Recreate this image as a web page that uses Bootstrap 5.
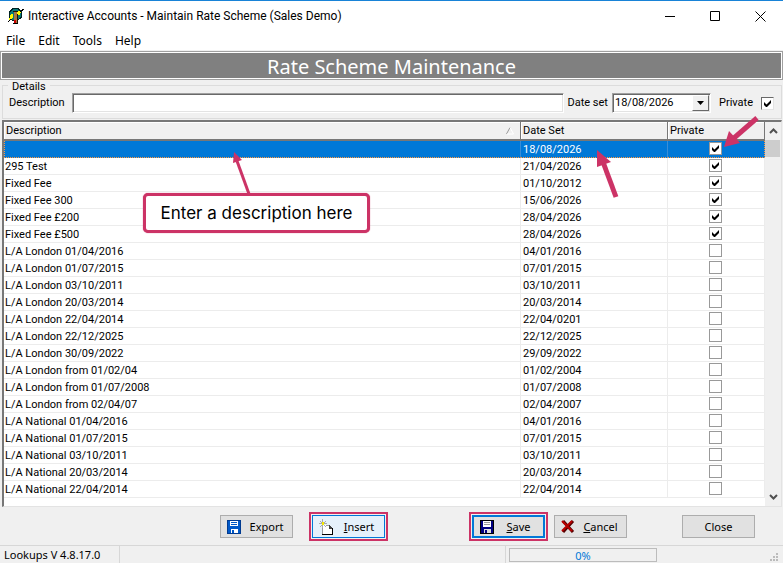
<!DOCTYPE html>
<html lang="en">
<head>
<meta charset="utf-8">
<meta name="viewport" content="width=device-width, initial-scale=1">
<title>Interactive Accounts - Maintain Rate Scheme (Sales Demo)</title>
<link href="https://cdn.jsdelivr.net/npm/bootstrap@5.3.0/dist/css/bootstrap.min.css" rel="stylesheet">
<style>
body{font:11px/16px Roboto,"Noto Sans",sans-serif;color:#000;background:#f0f0f0}
.win{border-top:1px solid #1883d7;min-height:100vh}
.titlebar{height:29px;font-size:12px}
.wbtn{width:45px;height:29px;border:0;background:none;padding:0}
.menubar{height:20px;padding:2px 6px 0;gap:13px;font:12px/18px "Noto Sans",sans-serif}
.menubar a{color:#000;text-decoration:none}
.banner{margin:1px 0 0;height:29px;border:1px solid #a0a0a0;box-shadow:inset 0 0 0 1px #fff;background:#808080;color:#fff;font:20px/30px "Noto Sans",sans-serif;text-align:center}
.group{margin:5px 1px 0 2px;border:1px solid #dcdcdc;height:34px;padding:7px 7px 0 6px;line-height:14px}
.group legend{top:-5px;left:5px;width:auto;padding:0 4px;background:#f0f0f0;font-size:11px;line-height:12px;margin:0}
.desc-label{width:63px}
.sunk{border:1px solid;border-color:#a0a0a0 #fff #fff #a0a0a0;box-shadow:inset 1px 1px #696969,inset -1px -1px #e3e3e3;background:#fff;border-radius:0;height:20px;padding:0 3px;outline:0;color:#000}
.datebox{width:99px;padding:0 2px}
.datebox select{appearance:none;border:0;background:none;padding:0;color:#000;height:16px;line-height:16px;outline:0}
.dropper{width:17px;height:16px;margin-top:1px;right:1px;top:0;background:#f0f0f0;border:1px solid;border-color:#fff #696969 #696969 #fff;pointer-events:none}
.tick{appearance:none;display:block;width:13px;height:13px;margin:0;border:1px solid #999;background:#fff center/11px 11px no-repeat}
.tick:checked{background-image:url("data:image/svg+xml,%3Csvg xmlns='http://www.w3.org/2000/svg' viewBox='0 0 11 11'%3E%3Cpath d='M2 4v3l2 2h1l4-4V2L4.500 6.500z'/%3E%3C/svg%3E")}
.tick-sunk{border-color:#696969 #e3e3e3 #e3e3e3 #696969}
.gridbox{margin:1px 1px 0 2px;border:solid;border-width:2px 1px 1px 2px;border-color:#777 #e3e3e3 #e3e3e3 #777;background:#fff}
.rates{table-layout:fixed;border-collapse:separate;border-spacing:0;width:100%}
.rates th{height:19px;padding:0 2px;font-weight:400;background:#f0f0f0;border-right:1px solid #777;border-bottom:2px solid #777;box-shadow:inset 1px 1px #fff;line-height:17px}
.rates td{height:17px;padding:2px 2px 0;line-height:14px;border-bottom:1px solid #ececec;border-right:1px solid #ececec;white-space:nowrap}
.rates td:first-child{padding-left:1px}
.rates td:last-child{padding:1px 4px 0 2px;vertical-align:top}
.rates .tick{margin:0 auto}
.rates .picked td{background:#0078d7;color:#fff;border-bottom:1px dotted #ff9840;border-right-color:#3a8dd6}
.picked td:first-child{border-left:1px dotted #ff9840}
.rates .picked td:last-child{border-right:1px dotted #ff9840}
.c-date{width:147px}.c-priv{width:97px}
.scroller{width:16px;background:#f0f0f0}
.thumb{width:15px;height:17px;background:#cdcdcd}
.sbtn{border:0;background:none;padding:0;width:16px;height:18px;line-height:0}
.actions{padding:5px 28px 4px 0}
.cmd{width:73px;height:23px;padding:0;border:1px solid #adadad;background:#e1e1e1;color:#000;display:flex;align-items:center;font-family:"Noto Sans",sans-serif}
.cmd svg{flex:none;margin-left:6px}
.cmd span{flex:1;text-align:center}
.hot{border:2px solid #cc3366;padding:1px}
.hot .cmd{border:1px solid #0078d7;background:#e5f1fb}
.hot .cmd.main{border-width:2px;background:#e1e1e1}
.save-slot{margin-left:81px}
.cancel-slot{margin-left:6px}
.close-slot{margin-left:55px}
.status{height:18px;border-top:1px solid #d7d7d7;font-family:"Noto Sans",sans-serif}
.pane{width:120px;height:17px;padding-left:4px;border-right:1px solid #d7d7d7;line-height:18px}
.meter-slot{border-left:1px solid #d7d7d7;padding-left:3px}
.meter{width:148px;height:14px;border:1px solid #bcbcbc;color:#0078d7;text-align:center;line-height:13px;overflow:hidden}
.grip{margin-left:113px;margin-right:3px}
.callout{left:139px;top:71px;width:227px;height:40px;border:3px solid #cc3366;border-radius:5px;background:#fff;font:17px/34px Inter,"Liberation Sans",sans-serif;text-align:center;box-shadow:0 0 1px #cc3366}
.ptr{pointer-events:none}
.ptr-a{left:225px;top:30px}.ptr-b{right:160px;top:28px}.ptr-c{right:21px;top:-6px}
</style>
<script src="https://cdn.jsdelivr.net/npm/bootstrap@5.3.0/dist/js/bootstrap.bundle.min.js"></script>
</head>
<body>
<div class="win d-flex flex-column">
  <header class="bg-white">
    <div class="titlebar d-flex align-items-center ps-2">
      <svg width="16" height="16" viewBox="0 0 16 16" shape-rendering="crispEdges"><path fill="#087878" stroke="#022" d="M5 .5h5l3 3v6l-3 2.500H4L1.500 9V4z"/><path fill="#a87840" d="M6 3h3v12H6z"/><path stroke="#210" d="M9.500 3v12M5 3.500h4"/><path stroke="#ff0" stroke-width="1.500" fill="none" d="M1 11l4-2M2 8l3 1M4 6v4M9 5l4-1M11 3v4"/><path stroke="#000" d="M12 4l4-3M0 14l3-3M5 15.500h5"/><path fill="#c00" d="M6 12h2v3H6z"/></svg>
      <span class="ms-1">Interactive Accounts - Maintain Rate Scheme (Sales Demo)</span>
      <div class="ms-auto d-flex">
        <button class="wbtn" aria-label="Minimise"><svg width="11" height="11"><path stroke="#000" d="M0 5.500h10"/></svg></button>
        <button class="wbtn" aria-label="Maximise"><svg width="11" height="11"><path fill="none" stroke="#000" d="M.5.5h9v9h-9z"/></svg></button>
        <button class="wbtn" aria-label="Close window"><svg width="11" height="11"><path stroke="#000" d="M.5.5l10 10M10.500.5l-10 10"/></svg></button>
      </div>
    </div>
    <nav class="menubar d-flex align-items-center"><a href="#">File</a><a href="#">Edit</a><a href="#">Tools</a><a href="#">Help</a></nav>
  </header>
  <h1 class="banner">Rate Scheme Maintenance</h1>
  <fieldset class="group position-relative d-flex align-items-center">
    <legend class="position-absolute">Details</legend>
    <label for="desc" class="desc-label">Description</label>
    <input id="desc" type="text" class="sunk flex-grow-1">
    <label for="dset" class="mx-1">Date set</label>
    <div class="datebox sunk position-relative d-flex align-items-center">
      <select id="dset" class="w-100"><option>18/08/2026</option></select>
      <span class="dropper position-absolute d-flex align-items-center justify-content-center"><svg width="7" height="4"><path d="M0 0h7L3.500 4z"/></svg></span>
    </div>
    <label for="priv" class="mx-2">Private</label>
    <input id="priv" type="checkbox" class="tick tick-sunk" checked>
  </fieldset>
  <main class="gridbox d-flex flex-grow-1 position-relative">
    <div class="flex-grow-1">
      <table class="rates">
        <colgroup><col><col class="c-date"><col class="c-priv"></colgroup>
        <thead><tr><th scope="col"><span class="d-flex justify-content-between align-items-center">Description<svg width="8" height="8" class="me-1"><path fill="none" stroke="#999" d="M.5 7L4 .5"/><path fill="none" stroke="#fff" d="M4 .5L7.500 7H1"/></svg></span></th><th scope="col">Date Set</th><th scope="col">Private</th></tr></thead>
        <tbody id="rows"></tbody>
      </table>
    </div>
    <div class="scroller d-flex flex-column">
      <button class="sbtn" aria-label="Scroll up"><svg width="9" height="6"><path fill="none" stroke="#505050" stroke-width="2" d="M1 5l3.500-3.500L8 5"/></svg></button>
      <div class="thumb"></div>
      <button class="sbtn mt-auto" aria-label="Scroll down"><svg width="9" height="6"><path fill="none" stroke="#505050" stroke-width="2" d="M1 1l3.500 3.500L8 1"/></svg></button>
    </div>
    <svg class="ptr ptr-a position-absolute" width="24" height="44"><path stroke="#cc3366" stroke-width="3" d="M20 42L8 9"/><path fill="#cc3366" d="M5 0l8 8-9 3z"/></svg>
    <div class="callout position-absolute">Enter a description here</div>
    <svg class="ptr ptr-b position-absolute" width="30" height="48"><path stroke="#cc3366" stroke-width="5" d="M25 47L12 12"/><path fill="#cc3366" d="M6 0l14 12-14 5z"/></svg>
    <svg class="ptr ptr-c position-absolute" width="38" height="34"><path stroke="#cc3366" stroke-width="5" d="M35 2L12 22"/><path fill="#cc3366" d="M2 31l5-16 11 12z"/></svg>
  </main>
  <div class="actions d-flex align-items-center justify-content-end">
    <button class="cmd me-3"><svg width="14" height="14" viewBox="0 0 14 14" shape-rendering="crispEdges"><path fill="#0058c8" d="M0 0h13l1 1v13H0z"/><path fill="none" stroke="#003a90" d="M.5.5h13v13H.5z"/><path fill="#fff" d="M3 1h8v5H3zM4 9h7v4H4z"/><path stroke="#0058c8" d="M4 2.500h6M4 4.500h6"/><path fill="#0058c8" d="M5 10h2v3H5z"/></svg><span>Export</span></button>
    <div class="hot"><button class="cmd"><svg width="15" height="16" viewBox="0 0 15 16" shape-rendering="crispEdges"><path fill="#fff" d="M4 6h6l3 3v6H4z"/><path fill="none" stroke="#999" d="M3.500 8v7M7 6.500h3"/><path fill="none" stroke="#000" d="M3 15.500h10.500V9"/><path fill="none" stroke="#444" d="M10.500 6v3H13M10 6.500l3 3"/><path stroke="#aaa" d="M1 2l6 6M7 2L1 8M3.500 0v9M0 4.500h8"/><path fill="#f5e800" d="M3 3h2v3H3z"/></svg><span><u>I</u>nsert</span></button></div>
    <div class="hot save-slot"><button class="cmd main"><svg width="14" height="14" viewBox="0 0 14 14" shape-rendering="crispEdges"><path fill="#000080" stroke="#000" d="M.5.500h13v13h-13z"/><path fill="#fff" d="M3 1h8v6H3z"/><path fill="#ddd" d="M4 9h7v4H4z"/><path stroke="#999" d="M4 2.500h6M4 4.500h6"/><path fill="#000080" d="M5 10h2v3H5z"/></svg><span><u>S</u>ave</span></button></div>
    <button class="cmd cancel-slot"><svg width="14" height="13" viewBox="0 0 14 13"><path stroke="#500" stroke-width="3" d="M2 1l10 11M12 1L2 12"/><path stroke="#b80000" stroke-width="2" d="M1 1l10 10M11 1L1 11"/></svg><span><u>C</u>ancel</span></button>
    <button class="cmd close-slot"><span>Close</span></button>
  </div>
  <footer class="status d-flex">
    <div class="pane">Lookups V 4.8.17.0</div>
    <div class="ms-auto d-flex align-items-center meter-slot"><div class="meter" role="progressbar" aria-label="Progress" aria-valuenow="0" aria-valuemin="0" aria-valuemax="100">0%</div></div>
    <svg class="grip mt-auto" width="10" height="10" shape-rendering="crispEdges"><path fill="#bbb" d="M6 0h2v2H6zM3 3h2v2H3zM6 3h2v2H6zM0 6h2v2H0zM3 6h2v2H3zM6 6h2v2H6z"/></svg>
  </footer>
</div>
<script>
const rates = [
  ["", "18/08/2026", 1], ["295 Test", "21/04/2026", 1], ["Fixed Fee", "01/10/2012", 1],
  ["Fixed Fee 300", "15/06/2026", 1], ["Fixed Fee £200", "28/04/2026", 1], ["Fixed Fee £500", "28/04/2026", 1],
  ["L/A London 01/04/2016", "04/01/2016", 0], ["L/A London 01/07/2015", "07/01/2015", 0],
  ["L/A London 03/10/2011", "03/10/2011", 0], ["L/A London 20/03/2014", "20/03/2014", 0],
  ["L/A London 22/04/2014", "22/04/0201", 0], ["L/A London 22/12/2025", "22/12/2025", 0],
  ["L/A London 30/09/2022", "29/09/2022", 0], ["L/A London from 01/02/04", "01/02/2004", 0],
  ["L/A London from 01/07/2008", "01/07/2008", 0], ["L/A London from 02/04/07", "02/04/2007", 0],
  ["L/A National 01/04/2016", "04/01/2016", 0], ["L/A National 01/07/2015", "07/01/2015", 0],
  ["L/A National 03/10/2011", "03/10/2011", 0], ["L/A National 20/03/2014", "20/03/2014", 0],
  ["L/A National 22/04/2014", "22/04/2014", 0]
];
document.getElementById("rows").innerHTML = rates.map(([name, date, on], i) =>
  `<tr${i ? "" : ' class="picked"'}><td>${name}</td><td>${date}</td><td><input type="checkbox" class="tick" aria-label="Private: ${name || "new rate"}"${on ? " checked" : ""}></td></tr>`).join("");
</script>
</body>
</html>
